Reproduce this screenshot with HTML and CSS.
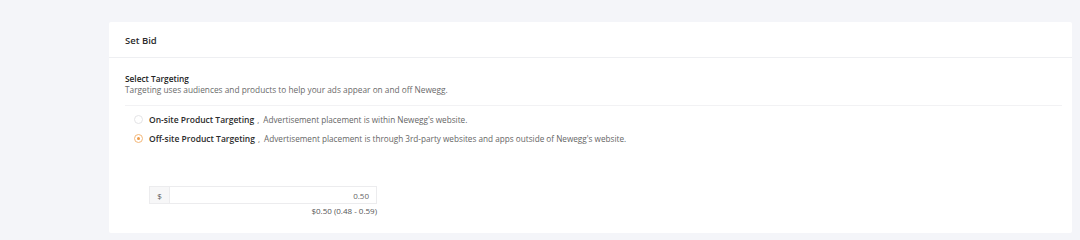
FILE: index.html
```html
<!DOCTYPE html>
<html>
<head>
<meta charset="utf-8">
<link rel="stylesheet" href="styles.css">
</head>
<body>
<div class="page">
  <div class="card">
    <div class="card-head">Set Bid</div>
    <div class="card-body">
      <div class="section-title">Select Targeting</div>
      <div class="section-desc">Targeting uses audiences and products to help your ads appear on and off Newegg.</div>
      <div class="divider"></div>
      <div class="options">
        <label class="option">
          <span class="radio"></span>
          <span class="opt-name">On-site Product Targeting</span><span class="comma">,</span>
          <span class="opt-desc">Advertisement placement is within Newegg's website.</span>
        </label>
        <label class="option">
          <span class="radio checked"></span>
          <span class="opt-name">Off-site Product Targeting</span><span class="comma">,</span>
          <span class="opt-desc">Advertisement placement is through 3rd-party websites and apps outside of Newegg's website.</span>
        </label>
      </div>
      <div class="bid">
        <div class="input">
          <span class="prefix">$</span>
          <span class="value">0.50</span>
        </div>
        <div class="hint">$0.50 (0.48 - 0.59)</div>
      </div>
    </div>
  </div>
</div>
</body>
</html>
```
FILE: styles.css
```css
html, body {
  margin: 0;
  padding: 0;
  background: #f4f5f9;
  font-family: "Open Sans", "Noto Sans", sans-serif;
  color: #333;
}
.page {
  padding: 22px 8px 0 109px;
}
.card {
  background: #fff;
  width: 963px;
  height: 211px;
  border-radius: 2px;
}
.card-head {
  height: 36px;
  box-sizing: border-box;
  padding: 12px 0 0 16px;
  font-size: 9.5px;
  font-weight: 600;
  color: #2b2b2b;
  border-bottom: 1px solid #eeeff2;
}
.card-body {
  padding: 15px 10px 0 16px;
}
.section-title {
  font-size: 8.3px;
  font-weight: 600;
  color: #222;
  line-height: 11px;
}
.section-desc {
  font-size: 8.3px;
  color: #6a6a6a;
  line-height: 11px;
}
.divider {
  height: 1px;
  background: #f2f2f4;
  margin-top: 10px;
}
.options {
  padding: 8px 0 0 9px;
  display: flex;
  flex-direction: column;
  gap: 8px;
}
.option {
  display: flex;
  align-items: center;
  font-size: 8px;
  line-height: 11px;
}
.radio {
  width: 9px;
  height: 9px;
  border: 1px solid #e4e4e6;
  border-radius: 50%;
  box-sizing: border-box;
  margin-right: 6px;
  position: relative;
}
.radio.checked {
  border-color: #f3b779;
}
.radio.checked::after {
  content: "";
  position: absolute;
  left: 2px;
  top: 2px;
  width: 3px;
  height: 3px;
  border-radius: 50%;
  background: #ee9c4a;
}
.opt-name {
  font-size: 8.5px;
  font-weight: 600;
  color: #2b2b2b;
}
.comma {
  margin-left: 3px;
  margin-right: 4px;
  color: #555;
}
.opt-desc {
  font-size: 8.2px;
  color: #666;
}
.bid {
  margin: 42px 0 0 24px;
  width: 228px;
  display: flex;
  flex-direction: column;
  align-items: flex-end;
}
.input {
  width: 228px;
  height: 18px;
  border: 1px solid #ececee;
  box-sizing: border-box;
  display: flex;
  font-size: 8px;
}
.prefix {
  width: 19px;
  background: #f7f7f8;
  border-right: 1px solid #ececee;
  display: flex;
  align-items: center;
  justify-content: center;
  color: #555;
}
.value {
  flex: 1;
  display: flex;
  align-items: center;
  justify-content: flex-end;
  padding-right: 7px;
  color: #666;
}
.hint {
  font-size: 8px;
  line-height: 11px;
  color: #555;
  margin-top: 1px;
}
```
